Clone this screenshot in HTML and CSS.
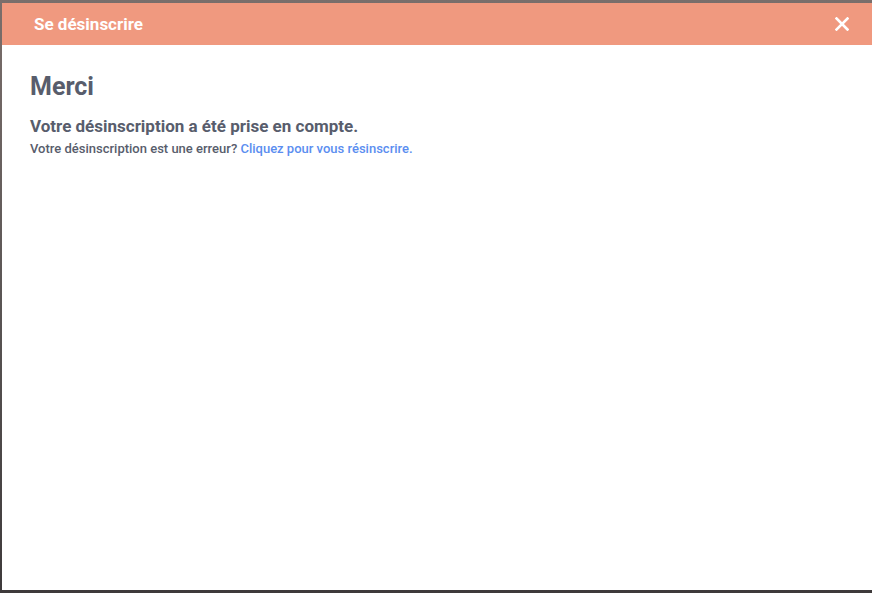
FILE: index.html
```html
<!DOCTYPE html>
<html lang="fr">
<head>
<meta charset="utf-8">
<title>Se désinscrire</title>
<link rel="stylesheet" href="styles.css">
</head>
<body>
<div class="backdrop">
  <div class="modal">
    <header class="modal-header">
      <h1 class="modal-title">Se désinscrire</h1>
      <button class="close" aria-label="Fermer">
        <svg width="14" height="14" viewBox="0 0 14 14"><path d="M1.5 1.5 L12.5 12.5 M12.5 1.5 L1.5 12.5" stroke="#fff" stroke-width="2.6" stroke-linecap="square" fill="none"/></svg>
      </button>
    </header>
    <main class="modal-body">
      <h2 class="thanks">Merci</h2>
      <p class="confirm">Votre désinscription a été prise en compte.</p>
      <p class="note">Votre désinscription est une erreur? <a href="#" class="link">Cliquez pour vous résinscrire.</a></p>
    </main>
  </div>
</div>
</body>
</html>
```
FILE: styles.css
```css
html, body {
  margin: 0;
  padding: 0;
  height: 100%;
}
body {
  font-family: Roboto, "Noto Sans", sans-serif;
  background: linear-gradient(180deg, #7a6e6b 0%, #5b5655 50%, #3e3a3b 100%);
  overflow: hidden;
}
.backdrop {
  padding: 3px 0 3px 2px;
  height: 100%;
  box-sizing: border-box;
}
.modal {
  background: #fff;
  height: 100%;
  display: flex;
  flex-direction: column;
}
.modal-header {
  background: #f0997f;
  height: 42px;
  display: flex;
  align-items: center;
  justify-content: space-between;
  padding: 0 23px 0 32px;
  flex-shrink: 0;
}
.modal-title {
  margin: 0;
  color: #fff;
  font-size: 17px;
  font-weight: 700;
}
.close {
  background: none;
  border: 0;
  padding: 0;
  width: 14px;
  height: 14px;
  display: flex;
  cursor: pointer;
}
.modal-body {
  padding: 27px 28px;
  color: #585d6c;
}
.thanks {
  margin: 0;
  font-size: 25px;
  font-weight: 700;
  line-height: 30px;
}
.confirm {
  margin: 13px 0 0;
  font-size: 17px;
  font-weight: 700;
  line-height: 22px;
}
.note {
  margin: 3px 0 0;
  font-size: 13px;
  font-weight: 500;
  line-height: 18px;
}
.link {
  color: #5b8ef0;
  text-decoration: none;
}
```
